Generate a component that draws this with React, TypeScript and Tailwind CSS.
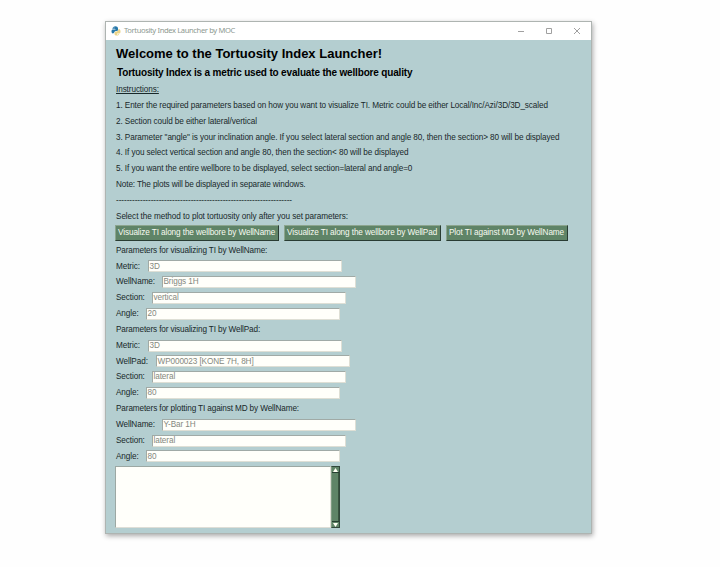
import React from "react";

function Line({ children, className = "" }: { children: React.ReactNode; className?: string }) {
  return (
    <div className="flex h-[15.85px] items-center pt-[0.6px]">
      <span className={`whitespace-pre ${className}`}>{children}</span>
    </div>
  );
}

function ActionButton({ children, className }: { children: React.ReactNode; className: string }) {
  return (
    <button
      className={`flex h-4 shrink-0 items-center whitespace-pre border border-t-[#8ca58e] border-l-[#8ca58e] border-r-[#293c33] border-b-[#293c33] bg-[#5f8467] pl-[2px] text-[#f7faf1] ${className}`}
    >
      {children}
    </button>
  );
}

function Field({ label, value, labelWidth }: { label: string; value: string; labelWidth: string }) {
  return (
    <div className="flex h-[15.85px] items-center">
      <span className={`shrink-0 whitespace-pre pt-[0.6px] ${labelWidth}`}>{label}</span>
      <div className="flex h-3 w-[194px] items-center whitespace-pre border border-t-[#a0aaa6] border-l-[#a0aaa6] border-r-[#dedfd5] border-b-[#dedfd5] bg-[#fffffa] pt-[0.6px] pl-[0.5px] text-[#85887f]">
        {value}
      </div>
    </div>
  );
}

function PythonLogo() {
  return (
    <svg className="h-[10px] w-[10px]" viewBox="0 0 20 20">
      <path d="M3 6c0-7 11-7 11-1v3c0 3-6 1-7 4-1 4-6 4-6-1 0-3 1-4 3-4h5V6Z" fill="#2878a9" />
      <path d="M15 6c4 0 4 3 4 6 0 3-2 3-4 3h-3v1h4c0 4-9 4-9 0v-2c0-5 8-1 8-8Z" fill="#ead589" />
      <circle cx="6" cy="4" r="1" fill="#fff" />
      <circle cx="13.5" cy="17" r="1" fill="#fff" />
    </svg>
  );
}

export default function App() {
  return (
    <main className="h-[567px] w-[720px] overflow-hidden bg-[#fefefe] pt-[21px] pl-[105px] font-['Liberation_Sans',Arial,sans-serif] text-[8.2px] leading-none tracking-[-0.1px] text-[#18282a]">
      <section className="flex h-[513px] w-[487px] flex-col border border-[#aeb4b1] bg-[#b4ced0] shadow-[1px_2px_5px_#0005]">
        <header className="flex h-[18px] shrink-0 items-center bg-white pl-[5px] text-[#8e9991]">
          <PythonLogo />
          <span className="ml-[3px] whitespace-pre font-['Noto_Sans',sans-serif] text-[7.6px] tracking-[-0.38px]">Tortuosity Index Launcher by MOC</span>
          <div className="ml-auto flex items-center gap-[20px] pr-[10px]">
            <svg className="h-[8px] w-[8px]" viewBox="0 0 8 8" fill="none" stroke="#a0a0a0"><path d="M1 4.5h6" /></svg>
            <svg className="h-[8px] w-[8px]" viewBox="0 0 8 8" fill="none" stroke="#a0a0a0"><path d="M1.5 1.5h5v5h-5z" /></svg>
            <svg className="h-[8px] w-[8px]" viewBox="0 0 8 8" fill="none" stroke="#a0a0a0"><path d="m1 1 6 6M7 1 1 7" /></svg>
          </div>
        </header>
        <div className="flex flex-col pl-[10px]">
          <h1 className="mt-[4px] flex h-[19px] items-center whitespace-pre text-[13px] font-bold tracking-normal text-black">Welcome to the Tortuosity Index Launcher!</h1>
          <h2 className="flex h-[18px] items-center whitespace-pre pl-px pt-px text-[10px] font-bold tracking-[-0.17px] text-black">Tortuosity Index is a metric used to evaluate the wellbore quality</h2>
          <div className="mt-px">
            <Line className="underline">Instructions:</Line>
            <Line>1. Enter the required parameters based on how you want to visualize TI. Metric could be either Local/Inc/Azi/3D/3D_scaled</Line>
            <Line>2. Section could be either lateral/vertical</Line>
            <Line className="tracking-[-0.08px]">3. Parameter "angle" is your inclination angle. If you select lateral section and angle 80, then the section&gt; 80 will be displayed</Line>
            <Line className="tracking-[-0.08px]">4. If you select vertical section and angle 80, then the section&lt; 80 will be displayed</Line>
            <Line className="tracking-[-0.09px]">5. If you want the entire wellbore to be displayed, select section=lateral and angle=0</Line>
            <Line className="tracking-[-0.12px]">Note: The plots will be displayed in separate windows.</Line>
            <Line className="tracking-[-0.06px]">------------------------------------------------------------------</Line>
            <Line className="tracking-[-0.07px]">Select the method to plot tortuosity only after you set parameters:</Line>
          </div>
          <div className="-ml-px mb-px flex h-[17px] items-center gap-[5px]">
            <ActionButton className="w-[164px]">Visualize TI along the wellbore by WellName</ActionButton>
            <ActionButton className="w-[157px]">Visualize TI along the wellbore by WellPad</ActionButton>
            <ActionButton className="w-[122px]">Plot TI against MD by WellName</ActionButton>
          </div>
          <div>
            <Line className="tracking-[-0.13px]">Parameters for visualizing TI by WellName:</Line>
            <Field label="Metric:" value="3D" labelWidth="w-[32px]" />
            <Field label="WellName:" value="Briggs 1H" labelWidth="w-[46px]" />
            <Field label="Section:" value="vertical" labelWidth="w-[36px]" />
            <Field label="Angle:" value="20" labelWidth="w-[30px]" />
            <Line className="tracking-[-0.13px]">Parameters for visualizing TI by WellPad:</Line>
            <Field label="Metric:" value="3D" labelWidth="w-[32px]" />
            <Field label="WellPad:" value="WP000023 [KONE 7H, 8H]" labelWidth="w-[40px]" />
            <Field label="Section:" value="lateral" labelWidth="w-[36px]" />
            <Field label="Angle:" value="80" labelWidth="w-[30px]" />
            <Line className="tracking-[-0.12px]">Parameters for plotting TI against MD by WellName:</Line>
            <Field label="WellName:" value="Y-Bar 1H" labelWidth="w-[46px]" />
            <Field label="Section:" value="lateral" labelWidth="w-[36px]" />
            <Field label="Angle:" value="80" labelWidth="w-[30px]" />
          </div>
          <div className="-ml-px mt-[2px] flex h-[62px] w-[225px]">
            <div className="h-full flex-1 border border-t-[#9ca8a3] border-l-[#9ca8a3] border-r-[#deded6] border-b-[#deded6] bg-[#fffffa]" />
            <div className="flex h-full w-[9px] flex-col border border-t-[#31473b] border-r-[#31473b] border-b-[#31473b] border-l-[#7f9b82] bg-[#5f8467]">
              <div className="flex h-[6px] items-center justify-center border-b border-[#263e30]">
                <svg className="h-[4px] w-[5px]" viewBox="0 0 5 4"><path d="M0 4 2.5 0 5 4Z" fill="#fffff5" /></svg>
              </div>
              <div className="flex-1 border-r border-[#39543f]" />
              <div className="flex h-[6px] items-center justify-center border-t border-[#263e30]">
                <svg className="h-[4px] w-[5px]" viewBox="0 0 5 4"><path d="M0 0h5L2.5 4Z" fill="#fffff5" /></svg>
              </div>
            </div>
          </div>
        </div>
      </section>
    </main>
  );
}
